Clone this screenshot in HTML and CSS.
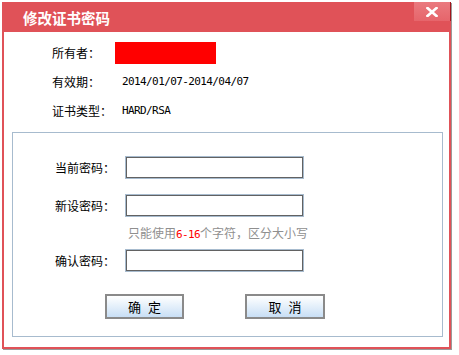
FILE: index.html
```html
<!DOCTYPE html>
<html lang="zh-CN">
<head>
    <meta charset="UTF-8">
    <title>修改证书密码</title>
    <link rel="stylesheet" href="styles.css">
</head>
<body>
    <div class="dialog">
        <div class="dialog-title">
            <span>修改证书密码</span>
            <a href="#" class="close-button" title="关闭">
                <svg width="12" height="10" viewBox="0 0 12 10">
                    <path d="M1.5 1 L10.5 9 M10.5 1 L1.5 9" stroke="#fff" stroke-width="2.6" stroke-linecap="square"/>
                </svg>
            </a>
        </div>

        <div class="info">
            <div class="info-row">
                <span class="info-label">所有者：</span>
                <span class="owner-mask"></span>
            </div>
            <div class="info-row">
                <span class="info-label">有效期：</span>
                <span class="info-value mono">2014/01/07-2014/04/07</span>
            </div>
            <div class="info-row">
                <span class="info-label">证书类型：</span>
                <span class="info-value mono">HARD/RSA</span>
            </div>
        </div>

        <form class="password-box">
            <div class="field">
                <label class="field-label">当前密码：</label>
                <input type="password" class="field-input">
            </div>
            <div class="field field-spaced">
                <label class="field-label">新设密码：</label>
                <input type="password" class="field-input">
            </div>
            <div class="hint">只能使用<span class="hint-strong">6-16</span>个字符，区分大小写</div>
            <div class="field">
                <label class="field-label">确认密码：</label>
                <input type="password" class="field-input">
            </div>
            <div class="actions">
                <button type="button" class="btn">确 定</button>
                <button type="button" class="btn btn-wide">取 消</button>
            </div>
        </form>
    </div>
</body>
</html>
```

FILE: styles.css
```css
:root {
    --red: #e05258;
    --line: #a7bbce;
    --cjk: "Noto Sans CJK SC", "Noto Sans", sans-serif;
}

body {
    margin: 0;
    padding: 2px;
    background: #fff;
    color: #000;
    font-family: var(--cjk);
    font-size: 12px;
}

.dialog {
    position: relative;
    width: 449px;
    height: 347px;
    box-sizing: border-box;
    border: 2px solid var(--red);
    border-top: 0;
    background: #fff;
    box-shadow: 1px 1px 0 #9a9a9a;
}

.dialog-title {
    height: 30px;
    margin: 0 -2px;
    padding-left: 21px;
    display: flex;
    align-items: center;
    background: var(--red);
    color: #fff;
    font-size: 14.5px;
    font-weight: bold;
}

.close-button {
    position: absolute;
    top: 0;
    right: -2px;
    width: 36px;
    height: 19px;
    display: flex;
    align-items: center;
    justify-content: center;
    background: linear-gradient(#ea7a7f, #e6656b);
    border-right: 1px solid #a3161c;
}

.info {
    padding: 6px 0 0 48px;
}

.info-row {
    height: 29px;
    display: flex;
    align-items: center;
}

.info-label {
    width: 63px;
}

.owner-mask {
    width: 101px;
    height: 22px;
    background: #ff0000;
}

.info-value {
    padding-left: 7px;
}

.mono {
    font-family: "DejaVu Sans Mono", "Liberation Mono", monospace;
    font-size: 11px;
    letter-spacing: -0.6px;
}

.password-box {
    margin: 7px 6px 0 8px;
    padding: 23px 0 0 42px;
    height: 205px;
    box-sizing: border-box;
    border: 1px solid var(--line);
}

.field {
    display: flex;
    align-items: center;
    height: 23px;
}

.field-spaced {
    margin-top: 15px;
}

.field-label {
    width: 70px;
}

.field-input {
    width: 179px;
    height: 23px;
    margin: 0;
    padding: 0 3px;
    box-sizing: border-box;
    border: 1px solid var(--line);
    box-shadow: inset 0 0 0 1px #626262;
    outline: none;
    font-size: 12px;
}

.hint {
    height: 32px;
    line-height: 31px;
    padding-left: 73px;
    color: #8f8f8f;
}

.hint-strong {
    color: #ff0000;
    font-family: "DejaVu Sans Mono", "Liberation Mono", monospace;
    font-size: 11px;
    letter-spacing: -0.6px;
}

.actions {
    display: flex;
    gap: 61px;
    margin-top: 22px;
    padding-left: 50px;
}

.btn {
    width: 79px;
    height: 25px;
    padding: 0;
    border: 2px solid #8a8a8a;
    background: linear-gradient(#ffffff, #c8dff5);
    font-family: var(--cjk);
    font-size: 13px;
    word-spacing: 4px;
    color: #000;
    cursor: pointer;
}

.btn-wide {
    width: 80px;
}
```
